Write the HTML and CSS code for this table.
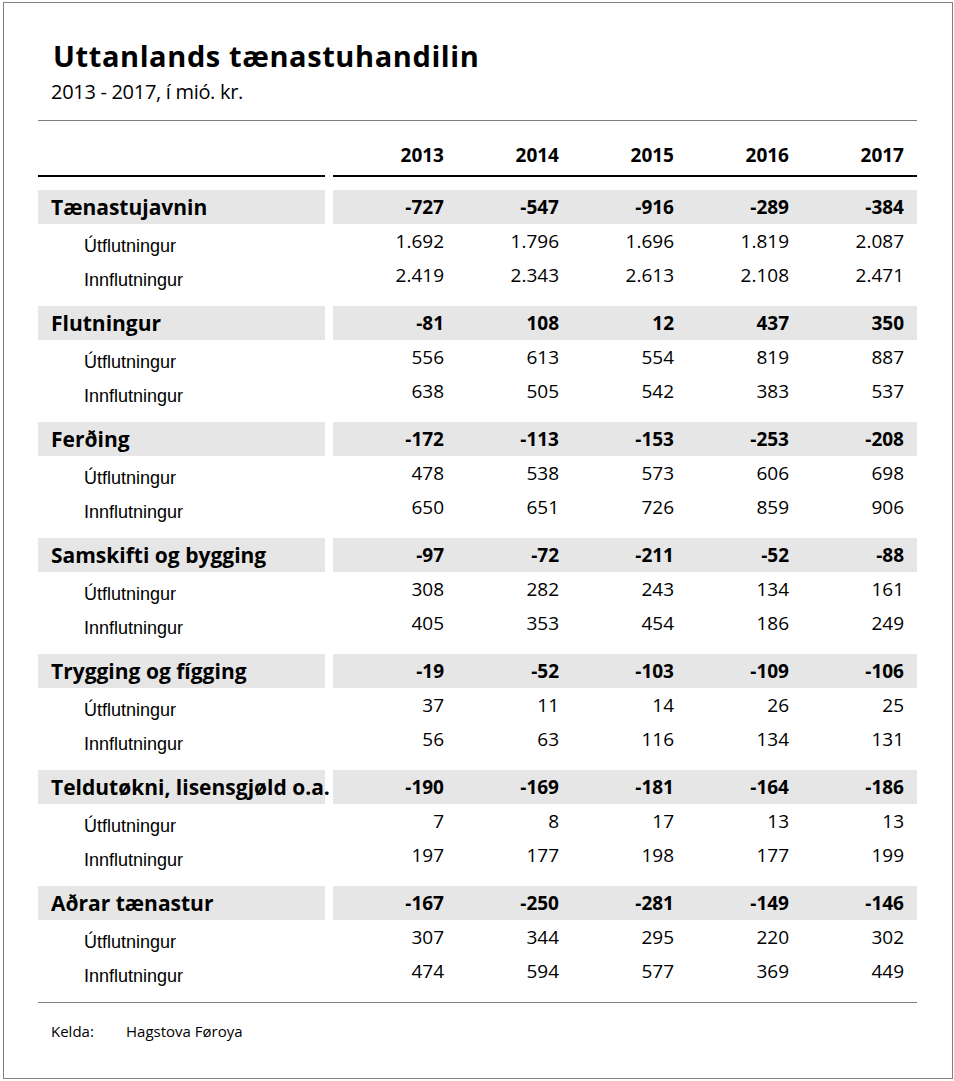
FILE: index.html
```
<!DOCTYPE html>
<html lang="fo">

<head>
  <meta charset="UTF-8" />
  <title>Uttanlands tænastuhandilin</title>
  <link rel="stylesheet" href="styles.css">
</head>

<body>
  <div class="frame">
    <h1 class="title">Uttanlands tænastuhandilin</h1>
    <div class="subtitle">2013 - 2017, í mió. kr.</div>

    <div class="table">
      <div class="row head">
        <div class="label"></div>
        <div class="vals">
          <span>2013</span><span>2014</span><span>2015</span><span>2016</span><span>2017</span>
        </div>
      </div>

      <div class="group">
        <div class="row total">
          <div class="label">Tænastujavnin</div>
          <div class="vals"><span>-727</span><span>-547</span><span>-916</span><span>-289</span><span>-384</span></div>
        </div>
        <div class="row sub">
          <div class="label">Útflutningur</div>
          <div class="vals"><span>1.692</span><span>1.796</span><span>1.696</span><span>1.819</span><span>2.087</span></div>
        </div>
        <div class="row sub">
          <div class="label">Innflutningur</div>
          <div class="vals"><span>2.419</span><span>2.343</span><span>2.613</span><span>2.108</span><span>2.471</span></div>
        </div>
      </div>

      <div class="group">
        <div class="row total">
          <div class="label">Flutningur</div>
          <div class="vals"><span>-81</span><span>108</span><span>12</span><span>437</span><span>350</span></div>
        </div>
        <div class="row sub">
          <div class="label">Útflutningur</div>
          <div class="vals"><span>556</span><span>613</span><span>554</span><span>819</span><span>887</span></div>
        </div>
        <div class="row sub">
          <div class="label">Innflutningur</div>
          <div class="vals"><span>638</span><span>505</span><span>542</span><span>383</span><span>537</span></div>
        </div>
      </div>

      <div class="group">
        <div class="row total">
          <div class="label">Ferðing</div>
          <div class="vals"><span>-172</span><span>-113</span><span>-153</span><span>-253</span><span>-208</span></div>
        </div>
        <div class="row sub">
          <div class="label">Útflutningur</div>
          <div class="vals"><span>478</span><span>538</span><span>573</span><span>606</span><span>698</span></div>
        </div>
        <div class="row sub">
          <div class="label">Innflutningur</div>
          <div class="vals"><span>650</span><span>651</span><span>726</span><span>859</span><span>906</span></div>
        </div>
      </div>

      <div class="group">
        <div class="row total">
          <div class="label">Samskifti og bygging</div>
          <div class="vals"><span>-97</span><span>-72</span><span>-211</span><span>-52</span><span>-88</span></div>
        </div>
        <div class="row sub">
          <div class="label">Útflutningur</div>
          <div class="vals"><span>308</span><span>282</span><span>243</span><span>134</span><span>161</span></div>
        </div>
        <div class="row sub">
          <div class="label">Innflutningur</div>
          <div class="vals"><span>405</span><span>353</span><span>454</span><span>186</span><span>249</span></div>
        </div>
      </div>

      <div class="group">
        <div class="row total">
          <div class="label">Trygging og fígging</div>
          <div class="vals"><span>-19</span><span>-52</span><span>-103</span><span>-109</span><span>-106</span></div>
        </div>
        <div class="row sub">
          <div class="label">Útflutningur</div>
          <div class="vals"><span>37</span><span>11</span><span>14</span><span>26</span><span>25</span></div>
        </div>
        <div class="row sub">
          <div class="label">Innflutningur</div>
          <div class="vals"><span>56</span><span>63</span><span>116</span><span>134</span><span>131</span></div>
        </div>
      </div>

      <div class="group">
        <div class="row total">
          <div class="label">Teldutøkni, lisensgjøld o.a.</div>
          <div class="vals"><span>-190</span><span>-169</span><span>-181</span><span>-164</span><span>-186</span></div>
        </div>
        <div class="row sub">
          <div class="label">Útflutningur</div>
          <div class="vals"><span>7</span><span>8</span><span>17</span><span>13</span><span>13</span></div>
        </div>
        <div class="row sub">
          <div class="label">Innflutningur</div>
          <div class="vals"><span>197</span><span>177</span><span>198</span><span>177</span><span>199</span></div>
        </div>
      </div>

      <div class="group">
        <div class="row total">
          <div class="label">Aðrar tænastur</div>
          <div class="vals"><span>-167</span><span>-250</span><span>-281</span><span>-149</span><span>-146</span></div>
        </div>
        <div class="row sub">
          <div class="label">Útflutningur</div>
          <div class="vals"><span>307</span><span>344</span><span>295</span><span>220</span><span>302</span></div>
        </div>
        <div class="row sub">
          <div class="label">Innflutningur</div>
          <div class="vals"><span>474</span><span>594</span><span>577</span><span>369</span><span>449</span></div>
        </div>
      </div>
    </div>

    <div class="source">
      <span class="source-key">Kelda:</span>
      <span>Hagstova Føroya</span>
    </div>
  </div>
</body>

</html>
```

FILE: styles.css
```
body {
  margin: 0;
  background: #ffffff;
  color: #000000;
  font-family: 'Open Sans', sans-serif;
}

.frame {
  box-sizing: border-box;
  width: 950px;
  height: 1077px;
  margin: 2px 0 0 3px;
  padding: 0 35px 0 34px;
  border: 1px solid #7f7f7f;
}

.title {
  margin: 0;
  padding: 35px 0 0 15px;
  font-size: 29px;
  line-height: 36px;
  font-weight: 700;
  letter-spacing: 0.6px;
}

.subtitle {
  margin-top: 5px;
  padding-left: 13px;
  font-size: 20px;
  line-height: 26px;
  letter-spacing: -0.3px;
}

.table {
  margin-top: 15px;
  border-top: 1px solid #7f7f7f;
  border-bottom: 1px solid #7f7f7f;
  padding-bottom: 14px;
}

.row {
  display: grid;
  grid-template-columns: 287px 1fr;
  grid-template-rows: 34px;
  column-gap: 8px;
  height: 34px;
}

.vals {
  display: grid;
  grid-template-columns: 111px repeat(4, 115px);
  padding-right: 13px;
  font-size: 19px;
}

.vals span {
  text-align: right;
  line-height: 34px;
}

.head {
  grid-template-rows: auto;
  height: auto;
}

.head .vals {
  padding-top: 17px;
  padding-bottom: 3px;
  font-weight: 700;
}

.head .label,
.head .vals {
  border-bottom: 2px solid #000000;
}

.group {
  margin-top: 13px;
}

.group + .group {
  margin-top: 14px;
}

.total .label,
.total .vals {
  background: #e6e6e6;
}

.total .label {
  padding-left: 13px;
  font-size: 21px;
  font-weight: 700;
  line-height: 34px;
  white-space: nowrap;
}

.total .vals {
  font-weight: 700;
}

.sub .label {
  padding: 5px 0 0 46px;
  font-family: 'Liberation Sans', Arial, sans-serif;
  font-size: 18px;
  line-height: 34px;
}

.source {
  display: flex;
  padding: 18px 0 0 13px;
  font-size: 15px;
  line-height: 20px;
}

.source-key {
  width: 75px;
}
```
